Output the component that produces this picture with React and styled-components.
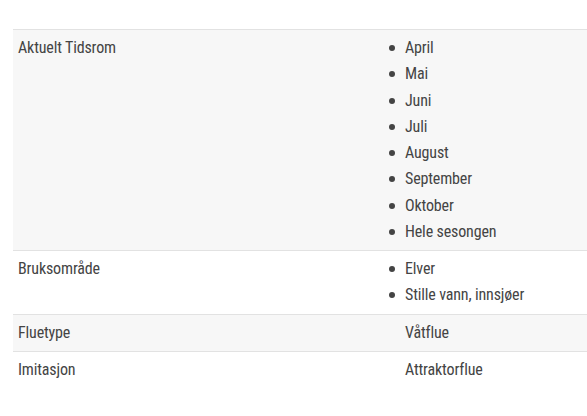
import React from "react"
import styled, { createGlobalStyle } from "styled-components"

const GlobalStyle = createGlobalStyle`
  html, body {
    margin: 0;
    background: #fff;
    overflow: hidden;
  }
  body {
    font-family: "Roboto Condensed", Roboto, "Liberation Sans", sans-serif;
    color: #444;
  }
`

const Page = styled.div`
  padding: 29px 0 0 13px;
`

const Table = styled.table`
  width: 750px;
  table-layout: fixed;
  border-collapse: collapse;
  border-top: 1px solid #e2e2e2;
`

const Row = styled.tr`
  background: ${(p) => (p.$shaded ? "#f7f7f7" : "#fff")};
  border-bottom: ${(p) => (p.$last ? "none" : "1px solid #e2e2e2")};
`

const Cell = styled.td`
  padding: 5px;
  vertical-align: top;
  font-family: "Roboto Condensed", Roboto, "Liberation Sans", sans-serif;
  font-size: 16px;
  letter-spacing: -0.15px;
  line-height: 26.25px;
  color: #444;
`

const Label = styled(Cell)`
  width: 365px;
`

const Value = styled(Cell)``

const Text = styled.div`
  margin-left: 12px;
  white-space: nowrap;
`

const List = styled.ul`
  list-style: none;
  margin: 0 0 0 12px;
  padding: 0;
`

const Item = styled.li`
  position: relative;
  white-space: nowrap;
  &::before {
    content: "";
    position: absolute;
    left: -16px;
    top: 10px;
    width: 6px;
    height: 6px;
    border-radius: 50%;
    background: #444;
  }
`

const rows = [
  {
    label: "Aktuelt Tidsrom",
    items: ["April", "Mai", "Juni", "Juli", "August", "September", "Oktober", "Hele sesongen"],
  },
  { label: "Bruksområde", items: ["Elver", "Stille vann, innsjøer"] },
  { label: "Fluetype", value: "Våtflue" },
  { label: "Imitasjon", value: "Attraktorflue" },
]

export default function App() {
  return (
    <>
      <GlobalStyle />
      <Page>
        <Table>
          <tbody>
            {rows.map((r, i) => (
              <Row key={r.label} $shaded={i % 2 === 0} $last={i === rows.length - 1}>
                <Label>{r.label}</Label>
                <Value>
                  {r.items ? (
                    <List>
                      {r.items.map((it) => (
                        <Item key={it}>{it}</Item>
                      ))}
                    </List>
                  ) : (
                    <Text>{r.value}</Text>
                  )}
                </Value>
              </Row>
            ))}
          </tbody>
        </Table>
      </Page>
    </>
  )
}
